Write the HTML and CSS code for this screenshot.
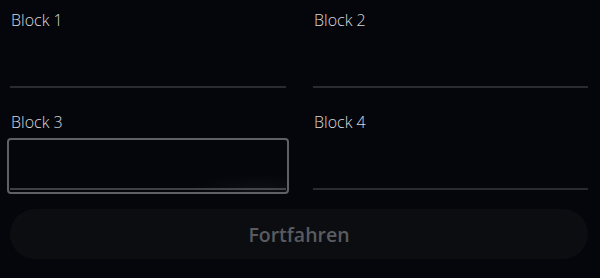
FILE: index.html
```html
<!DOCTYPE html>
<html lang="de">
<head>
<meta charset="utf-8">
<title>Blocks</title>
<link rel="stylesheet" href="styles.css">
</head>
<body>
<main class="page">
  <div class="grid">
    <div class="field">
      <label class="label">Block 1</label>
      <div class="input"></div>
    </div>
    <div class="field">
      <label class="label">Block 2</label>
      <div class="input"></div>
    </div>
    <div class="field">
      <label class="label">Block 3</label>
      <div class="input focused"></div>
    </div>
    <div class="field">
      <label class="label">Block 4</label>
      <div class="input"></div>
    </div>
  </div>
  <button class="btn" type="button">Fortfahren</button>
</main>
</body>
</html>
```
FILE: styles.css
```css
html, body {
  margin: 0;
  padding: 0;
  background: #05060b;
}
.page {
  width: 600px;
  height: 278px;
  box-sizing: border-box;
  padding: 8px 12px 0 10px;
  font-family: "Open Sans", "Noto Sans", sans-serif;
}
.grid {
  display: grid;
  grid-template-columns: 276px 275px;
  column-gap: 27px;
  row-gap: 22px;
}
.field {
  display: flex;
  flex-direction: column;
}
.label {
  display: block;
  height: 24px;
  line-height: 24px;
  font-size: 16px;
  font-weight: 300;
  color: #d8d9dc;
  padding-left: 1px;
}
.input {
  position: relative;
  height: 54px;
  border-bottom: 2px solid #2a2b2f;
}
.focused {
  border-bottom-color: #3e4044;
}
.focused::before {
  content: "";
  position: absolute;
  left: -3px;
  right: -3px;
  top: 4px;
  bottom: -6px;
  border: 2px solid #5e6064;
  border-radius: 4px;
  background: radial-gradient(ellipse 70px 18px at 90% 100%, rgba(255,255,255,0.04), rgba(255,255,255,0) 100%);
}
.btn {
  display: block;
  width: 578px;
  height: 50px;
  margin-top: 19px;
  border: 0;
  border-radius: 25px;
  background: #0c0d11;
  color: #595b60;
  font-family: "Open Sans", "Noto Sans", sans-serif;
  font-weight: 600;
  font-size: 19.5px;
  padding: 0;
}
```
